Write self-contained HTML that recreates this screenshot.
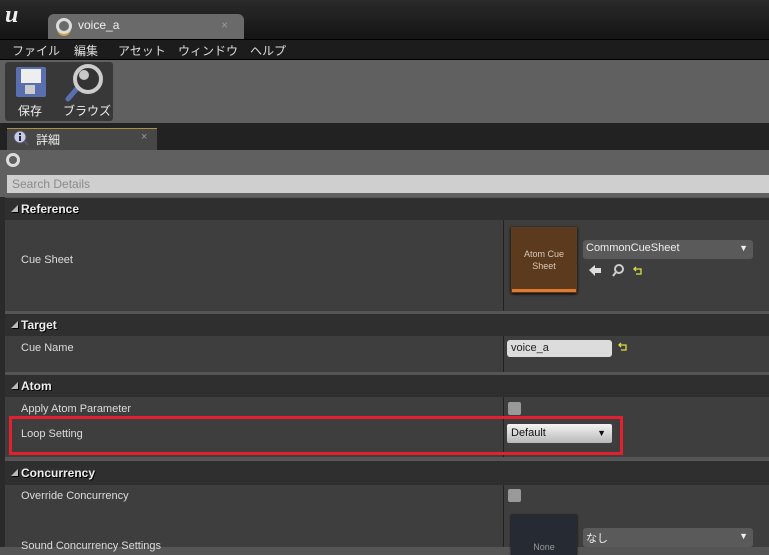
<!DOCTYPE html>
<html><head><meta charset="utf-8"><style>
*{margin:0;padding:0;box-sizing:border-box}
body{width:769px;height:547px;overflow:hidden;background:#555;font-family:"Liberation Sans","Noto Sans CJK JP",sans-serif;font-size:11px;color:#ddd;position:relative}
.a{position:absolute}
.hdr{position:absolute;left:5px;right:0;background:#2f2f2f;color:#eee;font-weight:bold;font-size:12px;padding-left:6px;display:flex;align-items:center;text-shadow:1px 1px 0 #000}
.hdr:before{content:"◢";font-size:7px;margin-right:3px;color:#bbb}
.row{position:absolute;left:5px;right:0;background:#3e3e3e}
.lbl{position:absolute;left:16px;color:#ddd}
.div{position:absolute;left:498px;top:0;bottom:0;width:1px;background:#222}
.chk{position:absolute;left:508px;width:13px;height:13px;background:#999;border-radius:2px}
</style></head><body>
<div class="a" style="left:0;top:0;width:769px;height:39px;background:linear-gradient(#2a2a2a,#141414)"></div>
<div class="a" style="left:5px;top:2px;font:italic bold 24px 'Liberation Serif',serif;color:#eee">u</div>
<div class="a" style="left:48px;top:14px;width:196px;height:25px;background:#6a6a6a;border-radius:6px 6px 0 0"></div>
<div class="a" style="left:56px;top:18px;width:16px;height:16px;border:3px solid #ddd;border-radius:50%;box-shadow:0 3px 0 -1px #c9a040"></div>
<div class="a" style="left:78px;top:18px;color:#f0f0f0;font-size:12px">voice_a</div>
<div class="a" style="left:221px;top:18px;color:#999;font-size:12px">×</div>
<div class="a" style="left:0;top:39px;width:769px;height:21px;background:#1c1c1c;border-top:1px solid #000;border-bottom:1px solid #000"></div>
<div class="a" style="left:12px;top:42px;font-size:12px">ファイル</div>
<div class="a" style="left:74px;top:42px;font-size:12px">編集</div>
<div class="a" style="left:118px;top:42px;font-size:12px">アセット</div>
<div class="a" style="left:178px;top:42px;font-size:12px">ウィンドウ</div>
<div class="a" style="left:250px;top:42px;font-size:12px">ヘルプ</div>
<div class="a" style="left:0;top:60px;width:769px;height:63px;background:#606060"></div>
<div class="a" style="left:5px;top:62px;width:108px;height:59px;background:#383838;border-radius:3px"></div>
<div class="a" style="left:16px;top:67px;width:30px;height:30px;background:#5a6fb0;border-radius:2px"><div style="margin:2px 5px;height:14px;background:#eee"></div><div style="margin:1px 9px;height:9px;width:10px;background:#ccc"></div></div>
<svg class="a" style="left:64px;top:63px" width="42" height="40"><line x1="16" y1="22" x2="4" y2="36" stroke="#5a6fb0" stroke-width="5" stroke-linecap="round"/><circle cx="24" cy="16" r="13" fill="#333" stroke="#ccc" stroke-width="4"/><circle cx="20" cy="12" r="5" fill="#eee" opacity=".8"/></svg>
<div class="a" style="left:18px;top:102px;font-size:12px;color:#eee">保存</div>
<div class="a" style="left:63px;top:102px;font-size:12px;color:#eee">ブラウズ</div>
<div class="a" style="left:0;top:123px;width:769px;height:27px;background:#222"></div>
<div class="a" style="left:7px;top:128px;width:150px;height:22px;background:#474747;border-top:1px solid #b09040"></div>
<svg class="a" style="left:13px;top:130px" width="16" height="16"><circle cx="7" cy="7" r="6" fill="#c8cce0" stroke="#556" stroke-width="1"/><rect x="6" y="6" width="2" height="5" fill="#224"/><rect x="6" y="3" width="2" height="2" fill="#224"/><line x1="11" y1="11" x2="15" y2="15" stroke="#557" stroke-width="2"/></svg>
<div class="a" style="left:36px;top:131px;font-size:12px;color:#eee">詳細</div>
<div class="a" style="left:141px;top:131px;color:#999">×</div>
<div class="a" style="left:0;top:150px;width:769px;height:47px;background:#606060"></div>
<div class="a" style="left:6px;top:153px;width:14px;height:14px;border:3px solid #ddd;border-radius:50%"></div>
<div class="a" style="left:7px;top:175px;width:762px;height:18px;background:#cfcfcf;color:#8a8a8a;font-size:12px;padding:2px 5px">Search Details</div>
<div class="a" style="left:0;top:197px;width:5px;height:350px;background:#2a2a2a"></div>

<div class="hdr" style="top:198px;height:22px">Reference</div>
<div class="row" style="top:220px;height:91px"><div class="div"></div><div class="lbl" style="top:34px">Cue Sheet</div></div>
<div class="a" style="left:511px;top:227px;width:66px;height:66px;background:#5b3a1e;box-shadow:0 1px 3px #000;color:#d8c8b8;font-size:9px;text-align:center;padding-top:21px;line-height:12px">Atom Cue<br>Sheet<div style="position:absolute;left:1px;right:1px;bottom:1px;height:3px;background:#e07a30"></div></div>
<div class="a" style="left:583px;top:240px;width:170px;height:19px;background:#5a5a5a;border-radius:3px;color:#eee;font-size:11px;padding:2px 3px">CommonCueSheet<span style="position:absolute;right:5px;top:3px;font-size:9px">▼</span></div>
<svg class="a" style="left:588px;top:264px" width="60" height="14"><path d="M1 6 L7 1 L7 4 L13 4 L13 9 L7 9 L7 12 Z" fill="#ddd"/><circle cx="31" cy="5" r="4" fill="none" stroke="#ccc" stroke-width="2"/><line x1="28" y1="8" x2="25" y2="12" stroke="#ccc" stroke-width="2"/><path d="M48 3 L46 5 L48 7 M46 5 H53 V10 H48" fill="none" stroke="#dd4" stroke-width="1.3"/></svg>

<div class="hdr" style="top:314px;height:22px">Target</div>
<div class="row" style="top:336px;height:36px"><div class="div"></div><div class="lbl" style="top:6px">Cue Name</div></div>
<div class="a" style="left:507px;top:340px;width:105px;height:17px;background:#dcdcdc;border-radius:3px;color:#222;padding:2px 4px">voice_a</div>
<svg class="a" style="left:618px;top:342px" width="10" height="10"><path d="M3 1 L1 3 L3 5 M1 3 H8 V8 H3" fill="none" stroke="#dd4" stroke-width="1.3"/></svg>

<div class="hdr" style="top:375px;height:22px">Atom</div>
<div class="row" style="top:397px;height:60px"><div class="div"></div><div class="lbl" style="top:6px">Apply Atom Parameter</div><div class="lbl" style="top:31px">Loop Setting</div></div>
<div class="chk" style="top:402px"></div>
<div class="a" style="left:507px;top:424px;width:105px;height:19px;background:linear-gradient(#f4f4f4,#b8b8b8);border-radius:2px;color:#111;padding:3px 4px">Default<span style="position:absolute;right:6px;top:4px;font-size:9px">▼</span></div>
<div class="a" style="left:9px;top:416px;width:614px;height:39px;border:3px solid #e32030"></div>

<div class="hdr" style="top:461px;height:24px">Concurrency</div>
<div class="row" style="top:485px;height:62px"><div class="div"></div><div class="lbl" style="top:5px">Override Concurrency</div><div class="lbl" style="top:55px">Sound Concurrency Settings</div></div>
<div class="chk" style="top:489px"></div>
<div class="a" style="left:511px;top:515px;width:66px;height:40px;background:#252a33;box-shadow:0 0 2px #000;color:#999;font-size:9px;text-align:center;padding-top:27px">None</div>
<div class="a" style="left:583px;top:528px;width:170px;height:19px;background:#5a5a5a;border-radius:3px;color:#eee;padding:2px 3px">なし<span style="position:absolute;right:5px;top:3px;font-size:9px">▼</span></div>
</body></html>
